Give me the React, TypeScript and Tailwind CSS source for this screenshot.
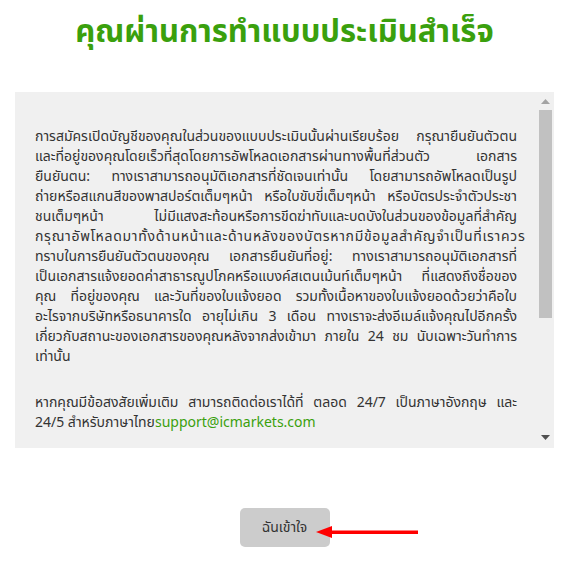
import React from 'react';

const font = { fontFamily: 'Tahoma, "Noto Sans Thai", "Noto Sans", "DejaVu Sans", sans-serif' };

const para1 = [
    'การสมัครเปิดบัญชีของคุณในส่วนของแบบประเมินนั้นผ่านเรียบร้อย กรุณายืนยันตัวตน',
    'และที่อยู่ของคุณโดยเร็วที่สุดโดยการอัพโหลดเอกสารผ่านทางพื้นที่ส่วนตัว เอกสาร',
    'ยืนยันตน: ทางเราสามารถอนุมัติเอกสารที่ชัดเจนเท่านั้น โดยสามารถอัพโหลดเป็นรูป',
    'ถ่ายหรือสแกนสีของพาสปอร์ตเต็มๆหน้า หรือใบขับขี่เต็มๆหน้า หรือบัตรประจำตัวประชา',
    'ชนเต็มๆหน้า ไม่มีแสงสะท้อนหรือการขีดฆ่าทับและบดบังในส่วนของข้อมูลที่สำคัญ',
];

const para1b = [
    'ทราบในการยืนยันตัวตนของคุณ เอกสารยืนยันที่อยู่: ทางเราสามารถอนุมัติเอกสารที่',
    'เป็นเอกสารแจ้งยอดค่าสาธารณูปโภคหรือแบงค์สเตนเม้นท์เต็มๆหน้า ที่แสดงถึงชื่อของ',
    'คุณ ที่อยู่ของคุณ และวันที่ของใบแจ้งยอด รวมทั้งเนื้อหาของใบแจ้งยอดด้วยว่าคือใบ',
    'อะไรจากบริษัทหรือธนาคารใด อายุไม่เกิน 3 เดือน ทางเราจะส่งอีเมล์แจ้งคุณไปอีกครั้ง',
    'เกี่ยวกับสถานะของเอกสารของคุณหลังจากส่งเข้ามา ภายใน 24 ชม นับเฉพาะวันทำการ',
];

const Line: React.FC<{ children: React.ReactNode; className?: string }> = ({ children, className = '' }) => (
    <div className={`whitespace-nowrap text-justify [text-align-last:justify] ${className}`}>{children}</div>
);

const App: React.FC = () => {
    return (
        <div className="min-h-screen bg-white" style={font}>
            <h1 className="pt-[13px] text-center text-[31px] font-bold leading-[40px] text-[#3aa00d]">
                คุณผ่านการทำแบบประเมินสำเร็จ
            </h1>

            {/* กล่องข้อความ */}
            <div className="mx-[15px] mt-[39px] flex h-[356px] bg-[#f0f0f0]">
                <div className="ml-[20px] w-[482px] shrink-0 pt-[35px] text-[14px] leading-[20px] text-[#333]">
                    {para1.map((t, i) => (
                        <Line key={i}>{t}</Line>
                    ))}
                    <Line className="tracking-[0.7px]">
                        กรุณาอัพโหลดมาทั้งด้านหน้าและด้านหลังของบัตรหากมีข้อมูลสำคัญจำเป็นที่เราควร
                    </Line>
                    {para1b.map((t, i) => (
                        <Line key={i}>{t}</Line>
                    ))}
                    <div>เท่านั้น</div>

                    <div className="mt-[26px]">
                        <Line>หากคุณมีข้อสงสัยเพิ่มเติม สามารถติดต่อเราได้ที่ ตลอด 24/7 เป็นภาษาอังกฤษ และ</Line>
                        <div>
                            24/5 สำหรับภาษาไทย<span className="text-[#3aa00d]">support@icmarkets.com</span>
                        </div>
                    </div>
                </div>

                {/* scrollbar */}
                <div className="ml-auto flex w-[17px] flex-col items-center py-[6px]">
                    <svg width="9" height="5" viewBox="0 0 9 5" className="mt-[1px]">
                        <path d="M0 5L4.5 0L9 5Z" fill="#a3a3a3" />
                    </svg>
                    <div className="mt-[6px] h-[208px] w-[13px] bg-[#c1c1c1]" />
                    <div className="flex-1" />
                    <svg width="9" height="5" viewBox="0 0 9 5" className="mb-[2px]">
                        <path d="M0 0L9 0L4.5 5Z" fill="#505050" />
                    </svg>
                </div>
            </div>

            <div className="mt-[60px] flex justify-center">
                <div className="relative">
                    <button className="h-[39px] w-[90px] rounded-[5px] bg-[#cccccc] text-[14px] text-[#333]">
                        ฉันเข้าใจ
                    </button>
                    <svg
                        width="104"
                        height="14"
                        viewBox="0 0 104 14"
                        className="pointer-events-none absolute left-[76px] top-[17px]"
                    >
                        <path d="M0 7L16 1L16 13Z" fill="#ff0000" />
                        <rect x="14" y="5.5" width="88" height="3.5" fill="#ff0000" />
                    </svg>
                </div>
            </div>
        </div>
    );
};

export default App;
